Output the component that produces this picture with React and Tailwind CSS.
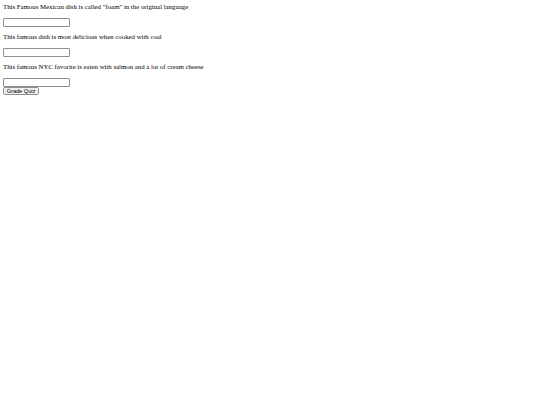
export default function App() {
  const qs = [
    'This Famous Mexican dish is called "foam" in the original language',
    "This famous dish is most delicious when cooked with coal",
    "This famous NYC favorite is eaten with salmon and a lot of cream cheese",
  ];
  return (
    <div className="w-[540px] h-[405px] bg-white pl-[3px] pt-[2px] text-[#000]" style={{ fontFamily: '"Liberation Serif", "Times New Roman", serif' }}>
      {qs.map((q, i) => (
        <div key={i} className={i === 0 ? "flex flex-col" : "flex flex-col mt-[5.5px]"}>
          <p className="text-[6.8px] leading-[9px] h-[9px] whitespace-nowrap">{q}</p>
          <input
            type="text"
            className="mt-[7px] w-[67px] h-[8.5px] border border-[#8f8f8f] rounded-[1px] bg-white outline-none"
          />
        </div>
      ))}
      <button
        className="block w-[36px] h-[8.5px] border border-[#8f8f8f] rounded-[1.5px] bg-[#efefef] text-[5.6px] leading-[6.5px] text-[#000] p-0"
        style={{ fontFamily: '"Liberation Sans", Arial, sans-serif' }}
      >
        Grade Quiz
      </button>
    </div>
  );
}
